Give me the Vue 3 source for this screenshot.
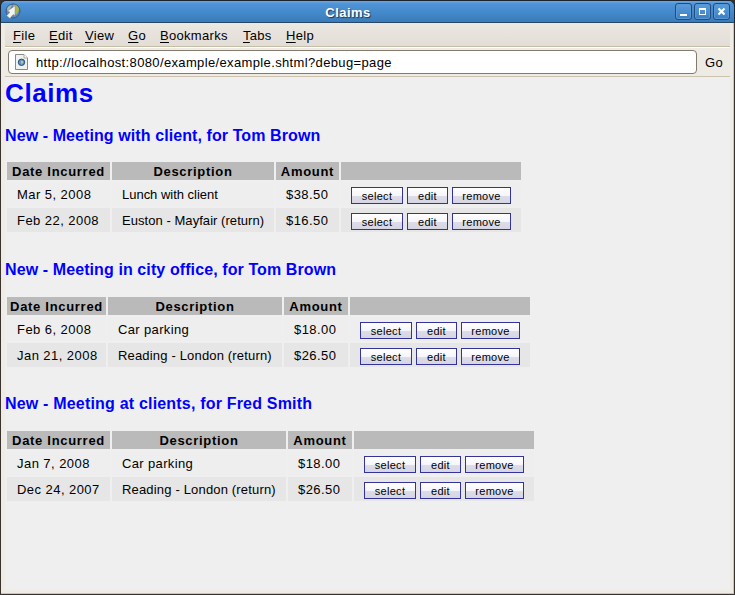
<script setup>
const menus = ['File', 'Edit', 'View', 'Go', 'Bookmarks', 'Tabs', 'Help']

const claims = [
  {
    title: 'New - Meeting with client, for Tom Brown',
    spacing: 0.09,
    columns: [103, 162, 63, 180],
    rows: [
      { date: 'Mar 5, 2008', description: 'Lunch with client', amount: '$38.50', spacing: -0.02 },
      { date: 'Feb 22, 2008', description: 'Euston - Mayfair (return)', amount: '$16.50', spacing: 0.05 },
    ],
  },
  {
    title: 'New - Meeting in city office, for Tom Brown',
    spacing: 0.1,
    columns: [99, 174, 64, 180],
    rows: [
      { date: 'Feb 6, 2008', description: 'Car parking', amount: '$18.00', spacing: 0.36 },
      { date: 'Jan 21, 2008', description: 'Reading - London (return)', amount: '$26.50', spacing: 0.17 },
    ],
  },
  {
    title: 'New - Meeting at clients, for Fred Smith',
    spacing: 0.19,
    columns: [103, 174, 64, 180],
    rows: [
      { date: 'Jan 7, 2008', description: 'Car parking', amount: '$18.00', spacing: 0.36 },
      { date: 'Dec 24, 2007', description: 'Reading - London (return)', amount: '$26.50', spacing: 0.17 },
    ],
  },
]

const template = (columns) => columns.map((w) => w + 'px').join(' ')
</script>

<template>
  <div class="window">
    <header class="titlebar">
      <svg class="globe" width="16" height="17" viewBox="0 0 16 17">
        <circle cx="8" cy="8" r="7" fill="#5f88b4" stroke="#3a5c86" />
        <path d="M8 2c3-1 6 2 6 5l-2 4-3 1-1-4z" fill="#a9b84a" />
        <path d="M2 6c1-3 3-4 5-4L5 6 3 9z" fill="#a7bcae" />
        <path d="M10.3 2.6 10 13.2 8.2 11.6 5 15.4 1.6 12.8 4.8 9.2 2.4 8Z" fill="#f5f4ef" stroke="#7d8078" stroke-width=".6" />
      </svg>
      <h1 class="caption">Claims</h1>
      <div class="controls">
        <span class="control"><svg width="15" height="15"><path d="M4 10h7v2H4z" fill="#fff" /></svg></span>
        <span class="control"><svg width="15" height="15"><path d="M4 4h7v7H4z M5 6v4h5V6z" fill="#fff" fill-rule="evenodd" /></svg></span>
        <span class="control"><svg width="15" height="15"><path d="M4.5 4.5l6 6M10.5 4.5l-6 6" stroke="#fff" stroke-width="2.2" /></svg></span>
      </div>
    </header>

    <div class="body">
      <nav class="menubar">
        <span v-for="m in menus" :key="m"><u>{{ m[0] }}</u>{{ m.slice(1) }}</span>
      </nav>
      <div class="toolbar">
        <div class="address">
          <svg class="page-icon" width="13" height="16" viewBox="0 0 13 16">
            <path d="M.5.5h8.5l3.5 3.5v11.5H.5z" fill="#f1f1ee" stroke="#888a85" />
            <path d="M9 .5V4h3.5" fill="#fff" stroke="#aaaca8" />
            <circle cx="6.5" cy="8.3" r="3.2" fill="#6796c4" stroke="#244d7b" />
            <path d="M6 7h2v2l-1.5 1z" fill="#b6cda5" />
          </svg>
          <span class="url">http://localhost:8080/example/example.shtml?debug=page</span>
        </div>
        <span class="go-button">Go</span>
      </div>

      <main class="page">
        <h1 class="page-title">Claims</h1>
        <section v-for="c in claims" :key="c.title" class="claim">
          <h2 :style="{ letterSpacing: c.spacing + 'px' }">{{ c.title }}</h2>
          <div class="table">
            <div class="row head" :style="{ gridTemplateColumns: template(c.columns) }">
              <span>Date Incurred</span><span>Description</span><span>Amount</span><span></span>
            </div>
            <div v-for="r in c.rows" :key="r.date" class="row" :style="{ gridTemplateColumns: template(c.columns) }">
              <span class="date">{{ r.date }}</span>
              <span :style="{ letterSpacing: r.spacing + 'px' }">{{ r.description }}</span>
              <span class="amount">{{ r.amount }}</span>
              <span class="actions">
                <button class="select">select</button>
                <button class="edit">edit</button>
                <button class="remove">remove</button>
              </span>
            </div>
          </div>
        </section>
      </main>
    </div>
  </div>
</template>

<style>
body {
  margin: 0;
  background: #3a3836;
}
</style>

<style scoped>
* {
  box-sizing: border-box;
}
.window {
  width: 735px;
  height: 595px;
  display: flex;
  flex-direction: column;
  background: #38332f;
  font: 13px/16px "Liberation Sans", Arial, sans-serif;
  color: #000;
  overflow: hidden;
}
.titlebar {
  flex: none;
  height: 23px;
  display: grid;
  grid-template-columns: 30px 1fr 70px;
  padding: 0 4px 0 5px;
  border: 1px solid #1c2430;
  border-bottom-color: #274769;
  border-radius: 6px 6px 0 0;
  background: linear-gradient(#6aa8e4, #4f93d6 3px, #4389ca 12px, #3a7ab9);
}
.globe {
  margin-top: 2px;
  margin-left: -1px;
}
.caption {
  margin: 0;
  padding: 4px 0 0;
  text-align: center;
  font: bold 13px/15px "Liberation Sans", Arial, sans-serif;
  letter-spacing: 0.45px;
  color: #fff;
  text-shadow: 1px 1px 1px #1c3a5c;
}
.controls {
  display: flex;
  justify-content: flex-end;
  gap: 2px;
  padding-top: 2px;
}
.control {
  width: 17px;
  height: 17px;
  border: 1px solid #214b7b;
  border-radius: 3px;
  background: linear-gradient(#5b9cdc, #3c7fc0);
  box-shadow: inset 0 0 0 1px #5898d6;
}
.control svg {
  display: block;
}
.body {
  flex: 1;
  display: flex;
  flex-direction: column;
  margin: 0 1px 1px;
  border: solid #cfc3b6;
  border-width: 0 1px 1px 0;
  padding: 0 3px 3px 4px;
  background: #efebe5;
}
.menubar {
  flex: none;
  height: 24px;
  display: grid;
  grid-template-columns: 36px 36px 43px 32px 83px 43px auto;
  padding: 5px 0 0 8px;
  background: linear-gradient(#ece8e2, #e2ddd5);
  border-bottom: 1px solid #c5bda5;
  letter-spacing: 0.3px;
}
.menubar u {
  text-underline-offset: 2px;
  text-decoration-thickness: 1px;
}
.toolbar {
  flex: none;
  height: 30px;
  display: flex;
  padding: 3px 0 0 3px;
  background: #eeebe4;
  border-top: 1px solid #fff;
  border-bottom: 1px solid #cdc2ad;
}
.address {
  width: 689px;
  height: 24px;
  margin-top: -1px;
  display: flex;
  align-items: center;
  padding-left: 6px;
  border: 1px solid #857a6e;
  border-radius: 4px;
  background: #fff;
}
.url {
  margin-left: 8px;
  padding-top: 2px;
  letter-spacing: 0.36px;
}
.go-button {
  padding: 4px 0 0 8px;
  letter-spacing: 0.3px;
}
.page {
  flex: 1;
  background: #efefef;
}
.page-title {
  margin: 0;
  height: 49px;
  font-size: 26px;
  line-height: 32px;
  letter-spacing: 0.6px;
  color: #00f;
}
.claim {
  height: 134px;
}
.claim:nth-of-type(1) {
  height: 135px;
}
h2 {
  margin: 0;
  height: 36px;
  font-size: 16px;
  line-height: 18px;
  color: #00f;
  white-space: nowrap;
}
.claim:nth-of-type(1) h2 {
  line-height: 20px;
}
.table {
  display: grid;
  gap: 2px;
  padding-left: 2px;
}
.row {
  display: grid;
  gap: 2px;
  height: 24px;
  white-space: nowrap;
}
.row > span {
  padding: 5px 0 0 10px;
  background: #eee;
}
.row:nth-child(3) > span {
  background: #e6e6e6;
}
.row.head {
  height: 18px;
}
.row.head > span {
  padding: 2px 0 0;
  background: #bababa;
  text-align: center;
  font-weight: bold;
  letter-spacing: 0.7px;
}
.row .date,
.row .amount {
  letter-spacing: 0.45px;
}
.row .actions {
  display: flex;
  gap: 4px;
}
button {
  height: 17px;
  padding: 0;
  border: 1px solid #333399;
  background: linear-gradient(#fff, #f5f5fb 50%, #dddde9 55%, #d5d5e4);
  font: 11px/14px "Liberation Sans", Arial, sans-serif;
  letter-spacing: 0.3px;
  color: #000;
}
.select {
  width: 52px;
}
.edit {
  width: 41px;
}
.remove {
  width: 59px;
}
</style>
